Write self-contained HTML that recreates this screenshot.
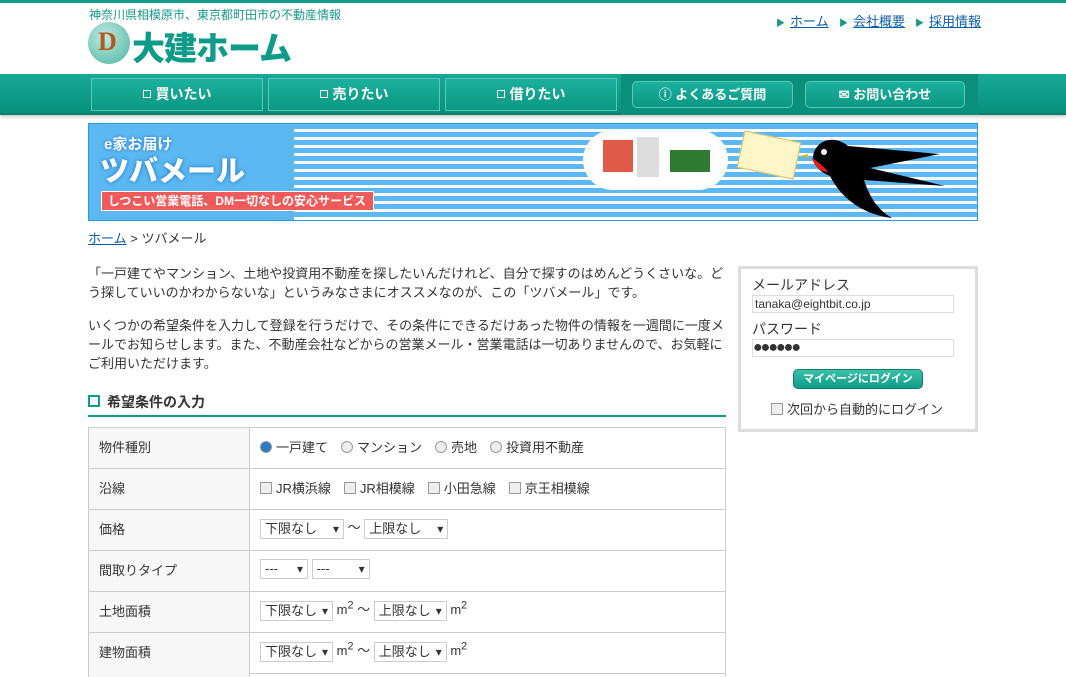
<!DOCTYPE html>
<html><head><meta charset="utf-8"><style>
*{margin:0;padding:0;box-sizing:border-box}
html,body{width:1066px;height:677px;overflow:hidden}
body{background:#fff;font-family:"Liberation Sans","Noto Sans CJK JP",sans-serif;font-size:13px;color:#333;position:relative}
.a{position:absolute}
a{color:#0b5ea8;text-decoration:underline}
.nav{left:0;top:74px;width:1066px;height:41px;background:linear-gradient(#1aa896,#06917e);border-bottom:2px solid #0a7d6d;box-shadow:0 2px 3px #ccc}
.nb{top:4px;height:33px;border:1px solid #5cc8b8;color:#fff;font-size:14px;font-weight:bold;text-align:center;line-height:31px;background:linear-gradient(#1cb09c,#0a9884)}
.nb.r{border-radius:5px}
.sq{display:inline-block;width:8px;height:8px;border:1px solid #fff;margin-right:5px;vertical-align:1px}
.tl{color:#0b5ea8;font-size:13px}
.tl span{color:#16998a;font-size:9px;margin-right:5px}
table{border-collapse:collapse;position:absolute;left:88px;top:427px;width:638px}
td{border:1px solid #ccc;height:41px;font-size:13px;padding-left:10px;padding-bottom:4px}
td.h{width:161px;background:#f7f7f7;color:#333}
.sel{display:inline-block;border:1px solid #ccc;height:20px;line-height:18px;padding:0 4px;font-size:13px;vertical-align:middle;position:relative;background:#fff}
.sel:after{content:"▾";position:absolute;right:4px;top:0;font-size:12px}
.cb{display:inline-block;width:12px;height:12px;border:1px solid #999;background:#eee;vertical-align:-1px;margin-right:4px}
.rd{display:inline-block;width:12px;height:12px;border:1px solid #999;border-radius:50%;background:#eee;vertical-align:-1px;margin-right:4px}
</style></head><body>
<div class="a" style="left:0;top:0;width:1066px;height:3px;background:#0e9c88"></div>
<div class="a" style="left:89px;top:6px;font-size:12px;color:#16998a">神奈川県相模原市、東京都町田市の不動産情報</div>
<div class="a" style="left:88px;top:22px;width:42px;height:42px;border-radius:50%;background:radial-gradient(circle at 40% 35%,#bfe9e0,#4bb5a2);"></div>
<div class="a" style="left:98px;top:27px;font:bold 26px 'Liberation Serif',serif;color:#b05a1e">D</div>
<div class="a" style="left:132px;top:22px;font-size:33px;font-weight:900;color:#0e9c88;letter-spacing:-1px">大建ホーム</div>
<div class="a tl" style="left:776px;top:11px"><span>▶</span><a>ホーム</a></div>
<div class="a tl" style="left:839px;top:11px"><span>▶</span><a>会社概要</a></div>
<div class="a tl" style="left:915px;top:11px"><span>▶</span><a>採用情報</a></div>
<div class="a nav">
<div class="a nb" style="left:91px;width:172px"><span class="sq"></span>買いたい</div>
<div class="a nb" style="left:268px;width:172px"><span class="sq"></span>売りたい</div>
<div class="a nb" style="left:445px;width:172px"><span class="sq"></span>借りたい</div>
<div class="a" style="left:621px;top:0;width:357px;height:41px;background:#0a8f7c"></div>
<div class="a nb r" style="left:632px;width:161px;top:7px;height:27px;line-height:25px;font-size:13px">ⓘ よくあるご質問</div>
<div class="a nb r" style="left:805px;width:160px;top:7px;height:27px;line-height:25px;font-size:13px">✉ お問い合わせ</div>
</div>
<div class="a" style="left:88px;top:123px;width:890px;height:98px;border:1px solid #2a9be0;background:repeating-linear-gradient(#5cb8f2 0 5px,#fff 5px 8px)"></div>
<div class="a" style="left:89px;top:124px;width:205px;height:96px;background:#5cb8f2"></div>
<div class="a" style="left:104px;top:133px;font-size:15px;font-weight:bold;color:#fff;text-shadow:0 0 3px #1670c0">e家お届け</div>
<div class="a" style="left:100px;top:148px;font-size:29px;font-weight:900;color:#fff;text-shadow:0 0 4px #1670c0">ツバメール</div>
<div class="a" style="left:101px;top:191px;width:273px;height:20px;background:#f15a5a;border:1px solid #fff;color:#fff;font-size:12px;font-weight:bold;line-height:18px;padding-left:6px">しつこい営業電話、DM一切なしの安心サービス</div>
<div class="a" style="left:583px;top:130px;width:145px;height:60px;border-radius:40px;background:#fff"></div>
<div class="a" style="left:603px;top:140px;width:30px;height:32px;background:#e05a48"></div>
<div class="a" style="left:637px;top:137px;width:22px;height:40px;background:#ddd"></div>
<div class="a" style="left:670px;top:150px;width:40px;height:22px;background:#2f7a2f"></div>
<div class="a" style="left:740px;top:136px;width:58px;height:38px;background:#fff6c8;border:1px solid #d8c060;transform:rotate(12deg)"></div>
<svg class="a" style="left:800px;top:126px" width="150" height="94" viewBox="0 0 150 94">
<path d="M14 26 C20 12 36 10 48 20 L140 28 L70 42 L145 60 L64 54 C70 72 78 84 92 92 C60 88 40 70 30 50 C20 46 10 38 14 26Z" fill="#000"/>
<path d="M12 32 C18 36 24 40 28 46 C20 46 14 40 12 32Z" fill="#e02020"/>
<circle cx="24" cy="26" r="3" fill="#fff"/>
<path d="M8 28 L0 30 L8 32Z" fill="#e0b020"/>
</svg>
<div class="a" style="left:88px;top:228px;font-size:13px"><a>ホーム</a> &gt; ツバメール</div>
<div class="a" style="left:88px;top:264px;width:640px;font-size:13px;line-height:19px">「一戸建てやマンション、土地や投資用不動産を探したいんだけれど、自分で探すのはめんどうくさいな。どう探していいのかわからないな」というみなさまにオススメなのが、この「ツバメール」です。</div>
<div class="a" style="left:88px;top:316px;width:636px;font-size:13px;line-height:19px">いくつかの希望条件を入力して登録を行うだけで、その条件にできるだけあった物件の情報を一週間に一度メールでお知らせします。また、不動産会社などからの営業メール・営業電話は一切ありませんので、お気軽にご利用いただけます。</div>
<div class="a" style="left:88px;top:395px;width:12px;height:12px;border:2px solid #0e9c88"></div>
<div class="a" style="left:107px;top:392px;font-size:14px;font-weight:bold">希望条件の入力</div>
<div class="a" style="left:88px;top:415px;width:638px;height:2px;background:#0e9c88"></div>
<table>
<tr><td class="h">物件種別</td><td><span class="rd" style="background:#2a7bbf"></span>一戸建て　<span class="rd"></span>マンション　<span class="rd"></span>売地　<span class="rd"></span>投資用不動産</td></tr>
<tr><td class="h">沿線</td><td><span class="cb"></span>JR横浜線　<span class="cb"></span>JR相模線　<span class="cb"></span>小田急線　<span class="cb"></span>京王相模線</td></tr>
<tr><td class="h">価格</td><td><span class="sel" style="width:84px">下限なし</span> ～ <span class="sel" style="width:84px">上限なし</span></td></tr>
<tr><td class="h">間取りタイプ</td><td><span class="sel" style="width:48px">---</span> <span class="sel" style="width:58px">---</span></td></tr>
<tr><td class="h">土地面積</td><td><span class="sel" style="width:73px">下限なし</span> m<sup>2</sup> ～ <span class="sel" style="width:73px">上限なし</span> m<sup>2</sup></td></tr>
<tr><td class="h">建物面積</td><td><span class="sel" style="width:73px">下限なし</span> m<sup>2</sup> ～ <span class="sel" style="width:73px">上限なし</span> m<sup>2</sup></td></tr>
</table>
<div class="a" style="left:88px;top:673px;width:162px;height:4px;background:#f7f7f7;border-left:1px solid #ccc;border-right:1px solid #ccc"></div>
<div class="a" style="left:725px;top:673px;width:1px;height:4px;background:#ccc"></div>
<div class="a" style="left:738px;top:266px;width:240px;height:166px;border:3px solid #ddd;background:#fff"></div>
<div class="a" style="left:752px;top:275px;font-size:14px">メールアドレス</div>
<div class="a" style="left:752px;top:295px;width:202px;height:18px;border:1px solid #ddd;font-size:12px;padding-left:2px;line-height:16px">tanaka@eightbit.co.jp</div>
<div class="a" style="left:752px;top:319px;font-size:14px">パスワード</div>
<div class="a" style="left:752px;top:339px;width:202px;height:18px;border:1px solid #ddd;font-size:16px;line-height:16px;letter-spacing:-2px">●●●●●●</div>
<div class="a" style="left:793px;top:369px;width:130px;height:20px;border-radius:5px;background:linear-gradient(#3cc0a8,#0e9c88);border:1px solid #0a7d6d;color:#fff;font-size:11px;font-weight:bold;text-align:center;line-height:18px">マイページにログイン</div>
<div class="a" style="left:771px;top:399px;font-size:13px"><span class="cb"></span>次回から自動的にログイン</div>
</body></html>
